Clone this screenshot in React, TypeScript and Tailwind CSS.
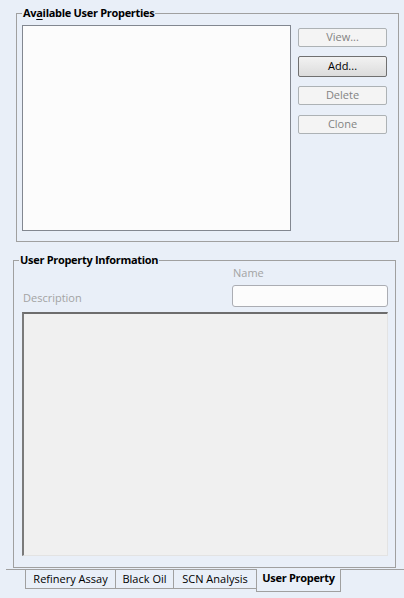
import React from "react";

const font = { fontFamily: '"Open Sans", "Noto Sans", "Liberation Sans", sans-serif' };

function Btn({ label, enabled, cls }: { label: string; enabled?: boolean; cls?: string }) {
  return enabled ? (
    <div className={`${cls ?? ""} h-[21px] w-[89px] rounded-[2px] border border-[#707070] bg-gradient-to-b from-[#f2f2f2] to-[#dcdcdc] flex items-center justify-center text-[11px] text-black`}>
      {label}
    </div>
  ) : (
    <div className={`${cls ?? ""} h-[19px] w-[89px] rounded-[2px] border border-[#adb2b5] bg-[#f4f4f4] flex items-center justify-center text-[11px] text-[#838383]`}>
      {label}
    </div>
  );
}

export default function App() {
  const tabs: [string, string][] = [
    ["Refinery Assay", "w-[90px]"],
    ["Black Oil", "w-[58px]"],
    ["SCN Analysis", "w-[83px]"],
  ];
  return (
    <div className="w-[404px] h-[598px] bg-[#e9eff8] overflow-hidden flex flex-col" style={font}>
      {/* Group 1 */}
      <div className="relative ml-[16px] mt-[13px] w-[383px] h-[229px] border border-[#a0a0a0]">
        <div className="absolute left-[5px] top-[-10px] px-[1px] bg-[#e9eff8] text-[11px] tracking-[-0.3px] font-bold leading-[18px] text-black whitespace-nowrap">
          Av<span className="underline underline-offset-2">a</span>ilable User Properties
        </div>
        <div className="flex pl-[5px] pt-[11px]">
          <div className="w-[269px] h-[206px] border border-[#828790] bg-[#fcfcfc]" />
          <div className="ml-[7px] pt-[3px] flex flex-col">
            <Btn label="View..." />
            <Btn label="Add..." enabled cls="mt-[9px]" />
            <Btn label="Delete" cls="mt-[9px]" />
            <Btn label="Clone" cls="mt-[10px]" />
          </div>
        </div>
      </div>

      {/* Group 2 */}
      <div className="relative ml-[13px] mt-[18px] w-[383px] h-[308px] border border-[#a0a0a0]">
        <div className="absolute left-[5px] top-[-10px] px-[1px] bg-[#e9eff8] text-[11px] tracking-[-0.3px] font-bold leading-[18px] text-black whitespace-nowrap">
          User Property Information
        </div>
        <div className="flex pl-[8px] pt-[4px]">
          <div className="w-[210px] flex flex-col justify-end">
            <div className="text-[11px] leading-[16px] text-[#a3a3a3] pl-[1px] pb-[1px]">Description</div>
          </div>
          <div className="flex flex-col">
            <div className="text-[11px] leading-[16px] text-[#a3a3a3] pl-[1px]">Name</div>
            <div className="mt-[4px] w-[156px] h-[22px] rounded-[3px] border border-[#abadb3] bg-[#fcfcfc]" />
          </div>
        </div>
        <div className="ml-[8px] mt-[5px] w-[366px] h-[244px] border-t-2 border-l-2 border-t-[#6d6d6d] border-l-[#7a7a7a] border-r border-b border-r-[#e3e3e3] border-b-[#e3e3e3] bg-[#f0f0f0]" />
      </div>

      {/* Tabs */}
      <div className="mt-[1px] ml-[6px] flex">
        <div className="w-[19px] border-t border-[#a0a0a0]" />
        {tabs.map(([t, w]) => (
          <div
            key={t}
            className={`${w} h-[20px] border-t border-b border-l border-[#a0a0a0] flex items-center justify-center whitespace-nowrap text-[11px] text-black`}
          >
            {t}
          </div>
        ))}
        <div className="h-[23px] w-[85px] border-l border-r border-b border-[#a0a0a0] flex items-start pt-[1px] justify-center whitespace-nowrap text-[11px] tracking-[-0.3px] font-bold text-black">
          User Property
        </div>
        <div className="flex-1 border-t border-[#a0a0a0]" />
      </div>
    </div>
  );
}
